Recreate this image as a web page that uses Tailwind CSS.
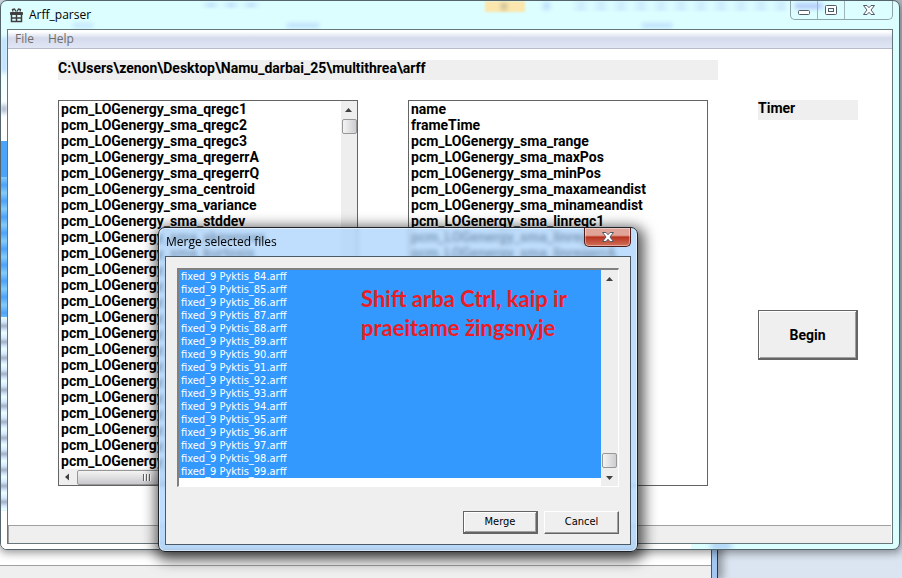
<!DOCTYPE html>
<html lang="en">
<head>
<meta charset="utf-8">
<title>Arff_parser</title>
<script src="https://cdn.jsdelivr.net/npm/@tailwindcss/browser@4"></script>
</head>
<body class="relative h-screen overflow-hidden bg-[#dbe5f1] font-['Open_Sans',sans-serif] text-black">

<!-- Windows further back on the desktop -->
<div class="absolute inset-y-0 right-0 h-[560px] w-2 bg-gradient-to-b from-[#b4bcc8] via-[#a9b4c4] via-90% to-[#dbe5f1]"></div>
<div class="absolute bottom-0 left-0 flex h-12 w-[718px] border-r border-[#30353c] bg-[#a3c7f0] pr-[5px] shadow-[3px_0_8px_2px_#00000055]">
  <div class="flex flex-1 flex-col border-r border-[#4b5563] bg-white pt-[35px]">
    <div class="flex-1 border-t border-[#a0a0a0] bg-[#efefef]"></div>
  </div>
</div>

<!-- Main window -->
<main class="absolute top-0 right-[2px] bottom-[28px] left-0 flex flex-col overflow-hidden rounded-[7px] border border-[#54646c] bg-[#dcfeff] px-[6px] pb-[5px] shadow-[0_2px_8px_1px_#00000066]">
  <!-- Blurred desktop showing through the glass frame -->
  <div class="absolute top-[15px] bottom-0 left-0 w-[6px] bg-gradient-to-b from-[#dcfeff] to-white to-20%"></div>
  <div class="absolute top-[36px] left-0 h-[36px] w-[6px] bg-[#b9defd] blur-[2px]"></div>
  <div class="absolute top-[104px] left-0 h-[8px] w-[6px] bg-[#a5b3c9] blur-[2px]"></div>
  <div class="absolute top-[140px] left-0 h-[38px] w-[6px] bg-[#4ba3fa]"></div>
  <div class="absolute top-[176px] left-0 h-[140px] w-[6px] bg-[repeating-linear-gradient(#84cbfa_0px,#4ba3fa_8px,#84cbfa_16px)]"></div>
  <div class="absolute top-[316px] left-0 h-[194px] w-[6px] bg-[repeating-linear-gradient(#e8ffff_0px,#d5e6fb_5px,#a3b1c9_9px,#d5e6fb_13px,#e8ffff_16px)]"></div>
  <div class="absolute bottom-0 left-0 h-[7px] w-[690px] bg-white"></div>
  <div class="absolute bottom-0 left-[710px] h-[6px] w-[20px] bg-[#9fc3f2] blur-[3px]"></div>
  <div class="absolute top-0 left-[484px] h-[11px] w-[40px] bg-[#fbe7ae] blur-[1px]"></div>
  <div class="absolute top-[2px] left-[500px] h-[7px] w-[6px] bg-[#cdbf98] blur-[2px]"></div>
  <div class="absolute top-[1px] left-[542px] h-[8px] w-[7px] bg-[#bfe0fc] blur-[2px]"></div>
  <div class="absolute top-0 left-[570px] h-[10px] w-[216px] bg-[repeating-linear-gradient(90deg,#dcfeff_0px,#cdecfd_10px,#dcfeff_20px)] blur-[1px]"></div>
  <div class="absolute top-[1px] left-[200px] h-[6px] w-[60px] bg-[repeating-linear-gradient(90deg,#dcfeff_0px,#c5e6fb_10px,#dcfeff_20px)] blur-[1px]"></div>
  <div class="absolute top-[22px] left-[72px] h-[5px] w-[20px] bg-[#c5e6fb] blur-[2px]"></div>
  <div class="absolute top-[22px] left-[286px] h-[5px] w-[32px] bg-[#bfe0fb] blur-[2px]"></div>
  <div class="absolute top-[22px] left-[641px] h-[5px] w-[30px] bg-[#bfe0fb] blur-[2px]"></div>
  <div class="absolute top-[2px] left-[794px] h-[6px] w-[28px] bg-[#b4ccfa] blur-[2px]"></div>
  <header class="relative flex h-[28px] shrink-0 items-center gap-[6px] pl-[3px]">
    <svg class="h-[15px] w-[13px]" viewBox="0 0 13 15" fill="none" stroke="#404040" aria-hidden="true">
      <path d="M6 3.500L4.500 1 2.500 1.500 3 3.500M7 3.500L8.500 1 10.500 1.500 10 3.500" stroke-width="1.300"/>
      <path d="M.5 4.500h12v2H.5z" fill="#404040"/>
      <path d="M1.500 6v7.500h10V6M6.500 4v10M1.500 10h10" stroke-width="1.500"/>
    </svg>
    <h1 class="text-[12px] leading-4">Arff_parser</h1>
    <div class="absolute top-0 right-0 flex h-[19px] rounded-b-[5px] border border-t-0 border-[#8fa3aa]">
      <button aria-label="Minimize" class="flex w-[27px] items-center justify-center border-r border-[#9fb3ba]">
        <svg class="h-[18px] w-[14px]" viewBox="0 0 14 18"><rect x="1.500" y="9.500" width="11" height="4" rx="1" fill="#fff" stroke="#535a66"/></svg>
      </button>
      <button aria-label="Maximize" class="flex w-[27px] items-center justify-center border-r border-[#9fb3ba]">
        <svg class="h-[18px] w-[14px]" viewBox="0 0 14 18"><rect x="1.500" y="4.500" width="11" height="9" rx="1" fill="#fff" stroke="#535a66"/><rect x="4.500" y="7.500" width="5" height="3" fill="#dff" stroke="#535a66"/></svg>
      </button>
      <button aria-label="Close" class="flex w-[47px] items-center justify-center">
        <svg class="h-[18px] w-[14px]" viewBox="0 0 14 18"><path d="M1.500 4.500h3.500L7 6.700 9 4.500h3.500L9 9l3.500 4.500H9L7 11.300 5 13.500H1.500L5 9Z" fill="#fff" stroke="#535a66"/></svg>
      </button>
    </div>
  </header>

  <div class="relative flex min-h-0 flex-1 flex-col border border-[#66777b] bg-white">
    <nav class="flex h-[19px] shrink-0 items-center gap-[14px] border-b border-[#b6bccc] bg-gradient-to-b from-white from-10% via-[#d5dbec] via-45% to-[#e1e6f5] pl-[7px] text-[12px] leading-4 text-[#6d6d6d]">
      <button>File</button>
      <button>Help</button>
    </nav>

    <section class="flex flex-1 flex-col gap-5 px-[50px] pt-[11px] font-['Roboto','Liberation_Sans',sans-serif] text-[14px] leading-4 font-bold">
      <p class="h-5 w-[660px] bg-[#efefef]">C:\Users\zenon\Desktop\Namu_darbai_25\multithrea\arff</p>
      <div class="grid grid-cols-[300px_300px_100px] gap-x-[50px]">
        <div class="flex h-[386px] flex-col border border-[#646464]">
          <div class="flex min-h-0 flex-1">
            <select multiple aria-label="Available attributes" class="min-w-0 flex-1 overflow-hidden border-0 bg-white [&>option]:h-4 [&>option]:min-h-0 [&>option]:p-0 [&>option]:pl-[2px] [&>option]:leading-4 [&>option]:font-bold">
              <option>pcm_LOGenergy_sma_qregc1</option>
              <option>pcm_LOGenergy_sma_qregc2</option>
              <option>pcm_LOGenergy_sma_qregc3</option>
              <option>pcm_LOGenergy_sma_qregerrA</option>
              <option>pcm_LOGenergy_sma_qregerrQ</option>
              <option>pcm_LOGenergy_sma_centroid</option>
              <option>pcm_LOGenergy_sma_variance</option>
              <option>pcm_LOGenergy_sma_stddev</option>
              <option>pcm_LOGenergy_sma_skewness</option>
              <option>pcm_LOGenergy_sma_kurtosis</option>
              <option>pcm_LOGenergy_sma_quartile1</option>
              <option>pcm_LOGenergy_sma_quartile2</option>
              <option>pcm_LOGenergy_sma_quartile3</option>
              <option>pcm_LOGenergy_sma_iqr1-2</option>
              <option>pcm_LOGenergy_sma_iqr2-3</option>
              <option>pcm_LOGenergy_sma_iqr1-3</option>
              <option>pcm_LOGenergy_sma_percentile95.0</option>
              <option>pcm_LOGenergy_sma_percentile98.0</option>
              <option>pcm_LOGenergy_sma_zcr</option>
              <option>pcm_LOGenergy_sma_numPeaks</option>
              <option>pcm_LOGenergy_sma_meanPeakDist</option>
              <option>pcm_LOGenergy_sma_peakMean</option>
              <option>pcm_LOGenergy_sma_amean</option>
            </select>
            <div class="flex w-4 flex-col items-center bg-[#eeeeee]">
              <svg class="h-[18px] w-4 shrink-0" viewBox="0 0 16 18"><path d="M4 11L7.500 7 11 11Z" fill="#404040"/></svg>
              <div class="h-[15px] w-[15px] rounded-[2px] border border-[#979797] bg-gradient-to-r from-[#f4f4f4] to-[#cdcdd2]"></div>
            </div>
          </div>
          <div class="flex h-4 shrink-0 items-center bg-[#efefef]">
            <svg class="h-4 w-[18px]" viewBox="0 0 18 16"><path d="M10 4.500L6 8l4 3.500Z" fill="#404040"/></svg>
            <div class="flex h-[15px] w-[140px] items-center justify-center gap-px rounded-[2px] border border-[#979797] bg-gradient-to-b from-[#f4f4f4] to-[#c9c9ce]">
              <i class="h-[7px] w-[2px] border-r border-white bg-[#606060]"></i><i class="h-[7px] w-[2px] border-r border-white bg-[#606060]"></i><i class="h-[7px] w-[2px] border-r border-white bg-[#606060]"></i>
            </div>
          </div>
        </div>
        <select multiple aria-label="Selected attributes" class="h-[386px] overflow-hidden border border-[#646464] bg-white [&>option]:h-4 [&>option]:min-h-0 [&>option]:p-0 [&>option]:pl-[2px] [&>option]:leading-4 [&>option]:font-bold">
          <option>name</option>
          <option>frameTime</option>
          <option>pcm_LOGenergy_sma_range</option>
          <option>pcm_LOGenergy_sma_maxPos</option>
          <option>pcm_LOGenergy_sma_minPos</option>
          <option>pcm_LOGenergy_sma_maxameandist</option>
          <option>pcm_LOGenergy_sma_minameandist</option>
          <option>pcm_LOGenergy_sma_linregc1</option>
          <option>pcm_LOGenergy_sma_linregc2</option>
          <option>pcm_LOGenergy_sma_linregerrA</option>
        </select>
        <div class="flex flex-col gap-[190px]">
          <p class="h-5 bg-[#efefef]">Timer</p>
          <button class="h-[50px] border border-r-2 border-b-2 border-[#646464] bg-[#efefef] shadow-[inset_1px_1px_#fff,inset_-1px_-1px_#a0a0a0]">Begin</button>
        </div>
      </div>
    </section>

    <footer class="mr-px h-[18px] shrink-0 border-t border-l border-[#a0a0a0] bg-[#efefef]"></footer>
  </div>
</main>

<!-- Merge dialog -->
<div role="dialog" aria-labelledby="dlg-title" class="absolute top-[227px] left-[158px] flex h-[325px] w-[480px] flex-col rounded-[7px] border border-[#1d2329] bg-[#a9d2fb]/75 px-[6px] pb-[6px] shadow-[inset_0_0_0_1px_#ffffff88,2px_4px_14px_4px_#000000aa] backdrop-blur-[2px]">
  <header class="relative flex h-[28px] shrink-0 items-center pl-px">
    <h2 id="dlg-title" class="text-[12px] leading-4">Merge selected files</h2>
    <button aria-label="Close dialog" class="absolute top-0 right-0 flex h-[19px] w-[47px] items-center justify-center rounded-b-[5px] border border-t-0 border-[#4c1c1c] bg-gradient-to-b from-[#e0a598] from-40% via-[#b8311d] via-50% to-[#d0705a] shadow-[inset_0_0_0_1px_#ffffff66]">
      <svg class="h-[18px] w-[14px]" viewBox="0 0 14 18"><path d="M1.500 4.500h3.500L7 6.700 9 4.500h3.500L9 9l3.500 4.500H9L7 11.300 5 13.500H1.500L5 9Z" fill="#fff" stroke="#535a66"/></svg>
    </button>
  </header>
  <div class="flex flex-1 flex-col border border-[#4c5a68] bg-[#efefef] px-[11px] pt-[11px] font-['DejaVu_Sans_Condensed','DejaVu_Sans',sans-serif] text-[11px]">
    <div class="relative flex h-[219px] border border-t-2 border-l-2 border-[#fff] border-t-[#808080] border-l-[#808080] bg-white">
      <select multiple aria-label="Files to merge" class="min-w-0 flex-1 overflow-hidden border-0 p-0 leading-[13px] [&>option]:h-[13px] [&>option]:min-h-0 [&>option]:bg-[#3399ff] [&>option]:bg-linear-to-r [&>option]:from-[#3399ff] [&>option]:to-[#3399ff] [&>option]:p-0 [&>option]:pl-[2px] [&>option]:[-webkit-text-fill-color:white]">
        <option selected>fixed_9 Pyktis_84.arff</option>
        <option selected>fixed_9 Pyktis_85.arff</option>
        <option selected>fixed_9 Pyktis_86.arff</option>
        <option selected>fixed_9 Pyktis_87.arff</option>
        <option selected>fixed_9 Pyktis_88.arff</option>
        <option selected>fixed_9 Pyktis_89.arff</option>
        <option selected>fixed_9 Pyktis_90.arff</option>
        <option selected>fixed_9 Pyktis_91.arff</option>
        <option selected>fixed_9 Pyktis_92.arff</option>
        <option selected>fixed_9 Pyktis_93.arff</option>
        <option selected>fixed_9 Pyktis_94.arff</option>
        <option selected>fixed_9 Pyktis_95.arff</option>
        <option selected>fixed_9 Pyktis_96.arff</option>
        <option selected>fixed_9 Pyktis_97.arff</option>
        <option selected>fixed_9 Pyktis_98.arff</option>
        <option selected>fixed_9 Pyktis_99.arff</option>
      </select>
      <div class="flex w-[17px] flex-col items-center justify-between bg-[#eeeeee]">
        <svg class="h-[18px] w-4" viewBox="0 0 16 18"><path d="M4 11L7.500 7 11 11Z" fill="#404040"/></svg>
        <div class="flex flex-col items-center">
          <div class="h-[15px] w-[15px] rounded-[2px] border border-[#979797] bg-gradient-to-r from-[#f4f4f4] to-[#cdcdd2]"></div>
          <svg class="h-[18px] w-4" viewBox="0 0 16 18"><path d="M4 8L7.500 12 11 8Z" fill="#404040"/></svg>
        </div>
      </div>
      <p class="absolute top-[14px] left-[182px] w-[230px] font-['Lato',sans-serif] text-[22px] leading-[29px] font-bold text-[#ed1c24]">Shift arba Ctrl, kaip ir praeitame žingsnyje</p>
    </div>
    <div class="mt-[24px] flex justify-end gap-[6px]">
      <button class="h-[23px] w-[75px] border border-r-2 border-b-2 border-[#646464] bg-[#efefef] shadow-[inset_1px_1px_#fff,inset_-1px_-1px_#a0a0a0]">Merge</button>
      <button class="h-[23px] w-[75px] border border-white border-r-[#646464] border-b-[#646464] bg-[#efefef] shadow-[inset_-1px_-1px_#a0a0a0]">Cancel</button>
    </div>
  </div>
</div>
</body>
</html>
